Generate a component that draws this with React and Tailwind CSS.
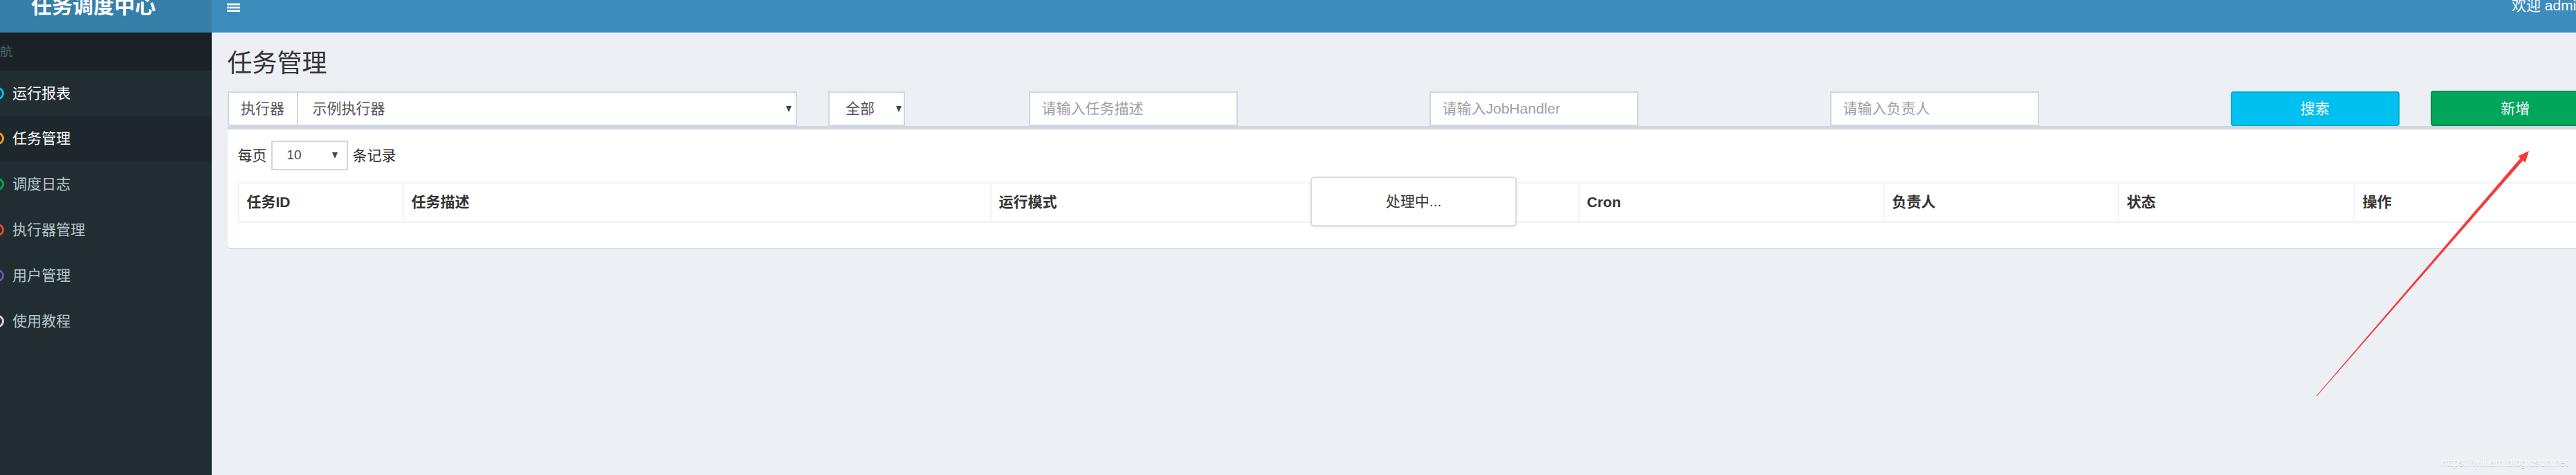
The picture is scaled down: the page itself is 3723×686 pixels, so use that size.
import React from "react";

const menu = [
  { name: "运行报表", color: "#00c0ef", bright: true },
  { name: "任务管理", color: "#f39c12", active: true },
  { name: "调度日志", color: "#00a65a" },
  { name: "执行器管理", color: "#dd4b39" },
  { name: "用户管理", color: "#605ca8" },
  { name: "使用教程", color: "#d2d6de" },
];

const columns = [
  { label: "任务ID", w: "w-[236px]" },
  { label: "任务描述", w: "w-[849px]" },
  { label: "运行模式", w: "w-[850px]" },
  { label: "Cron", w: "w-[441px]" },
  { label: "负责人", w: "w-[339px]" },
  { label: "状态", w: "w-[341px]" },
  { label: "操作", w: "flex-1" },
];

function Caret() {
  return (
    <svg width="8" height="9" viewBox="0 0 8 9" className="shrink-0">
      <path d="M0 0h8L4 9z" fill="#444" />
    </svg>
  );
}

function TextInput({ placeholder }) {
  return (
    <input
      readOnly
      placeholder={placeholder}
      className="w-[302px] h-[50px] border-2 border-[#d2d6de] bg-white px-[17px] text-[21px] text-[#555] placeholder:text-[#a0a0a0] outline-none"
    />
  );
}

export default function App() {
  return (
    <div className="relative w-[3723px] h-[686px] overflow-hidden bg-[#ecf0f5] font-['Liberation_Sans','Noto_Sans_CJK_SC',sans-serif] text-[#333]">
      <div className="w-[3780px] h-full flex flex-col">
        {/* top bar */}
        <div className="flex h-[47px] shrink-0">
          <div className="w-[306px] shrink-0 bg-[#367fa9] pl-[45px] overflow-hidden">
            <div className="-mt-[6px] text-[30px] leading-[30px] font-bold text-white whitespace-nowrap">任务调度中心</div>
          </div>
          <div className="flex-1 bg-[#3c8dbc] flex items-start pl-[22px] pr-[45px]">
            <svg width="19" height="12" viewBox="0 0 19 12" className="mt-[5px]">
              <rect x="0" y="0" width="19" height="2.6" fill="#fff" />
              <rect x="0" y="4.7" width="19" height="2.6" fill="#fff" />
              <rect x="0" y="9.4" width="19" height="2.6" fill="#fff" />
            </svg>
            <div className="ml-auto -mt-[4px] text-[21px] leading-[24px] text-white whitespace-nowrap">欢迎 admin</div>
          </div>
        </div>

        <div className="flex flex-1">
          {/* sidebar */}
          <div className="w-[306px] shrink-0 bg-[#222d32] overflow-hidden">
            <div className="h-[55px] bg-[#1a2226] flex items-center">
              <span className="-ml-[18px] text-[18px] leading-[20px] text-[#4b646f]">导航</span>
            </div>
            {menu.map((m, i) => (
              <div
                key={m.name}
                className={`${i === 0 ? "h-[65px]" : "h-[66px]"} flex items-center ${m.active ? "bg-[#1e282c] text-white" : m.bright ? "text-white" : "text-[#b8c7ce]"}`}
              >
                <svg width="18" height="18" viewBox="0 0 18 18" className="-ml-[12px] shrink-0">
                  <circle cx="9" cy="9" r="7.5" fill="none" stroke={m.color} strokeWidth="3" />
                </svg>
                <span className="ml-[12px] text-[21px] leading-[24px] whitespace-nowrap">{m.name}</span>
              </div>
            ))}
          </div>

          {/* content */}
          <div className="flex-1 px-[22.5px]">
            <h1 className="mt-[25px] text-[36px] leading-[40px] text-[#333]">任务管理</h1>

            <div className="mt-[20px] -mx-[22.5px] grid grid-cols-12 h-[50px]">
              <div className="col-span-3 px-[22.5px]">
                <div className="flex h-[50px] border-2 border-[#d2d6de] bg-white text-[21px] text-[#555]">
                  <div className="w-[100px] border-r-2 border-[#d2d6de] flex items-center justify-center">执行器</div>
                  <div className="flex-1 flex items-center pl-[21px] pr-[6px]">
                    <span>示例执行器</span>
                    <span className="ml-auto"><Caret /></span>
                  </div>
                </div>
              </div>
              <div className="col-span-1 px-[22.5px]">
                <div className="w-[111px] h-[50px] border-2 border-[#d2d6de] bg-white flex items-center justify-between pl-[23px] pr-[3px] text-[21px] text-[#555]">
                  <span>全部</span>
                  <Caret />
                </div>
              </div>
              <div className="col-span-2 px-[22.5px]">
                <TextInput placeholder="请输入任务描述" />
              </div>
              <div className="col-span-2 px-[22.5px]">
                <TextInput placeholder="请输入JobHandler" />
              </div>
              <div className="col-span-2 px-[22.5px]">
                <TextInput placeholder="请输入负责人" />
              </div>
              <div className="col-span-1 px-[22.5px]">
                <button className="w-full h-[50px] rounded-[4px] bg-[#00c0ef] border-2 border-[#00acd6] text-white text-[21px]">搜索</button>
              </div>
              <div className="col-span-1 px-[22.5px]">
                <button className="w-full h-[51px] -mt-[1px] rounded-[4px] bg-[#00a65a] border-2 border-[#008d4c] text-white text-[21px]">新增</button>
              </div>
            </div>

            <div className="bg-white border-t-[5px] border-[#d2d6de] rounded-[4px] shadow-[0_1px_1px_rgba(0,0,0,0.12)]">
              <div className="px-[15px] pt-[16px] pb-[36px]">
                <div className="flex items-center h-[43px] text-[21px] text-[#333]">
                  <span>每页</span>
                  <div className="ml-[6px] w-[111px] h-[43px] border-2 border-[#d2d6de] flex items-center justify-between pl-[21px] pr-[13px] text-[#444]">
                    <span className="text-[19px]">10</span>
                    <Caret />
                  </div>
                  <span className="ml-[7px]">条记录</span>
                </div>

                <div className="mt-[17px] flex h-[59px] border-2 border-b-[3px] border-[#f4f4f4]">
                  {columns.map((c, i) => (
                    <div
                      key={c.label}
                      className={`${c.w} shrink-0 ${i ? "border-l-2 border-[#f4f4f4]" : ""} flex items-center px-[11px] text-[21px] font-bold text-[#333]`}
                    >
                      {c.label}
                    </div>
                  ))}
                </div>
              </div>
            </div>
          </div>
        </div>
      </div>

      {/* loading overlay */}
      <div className="absolute left-[1894px] top-[255px] w-[298px] h-[72px] bg-white border-2 border-[#ddd] rounded-[5px] shadow-[0_1px_3px_rgba(0,0,0,0.1)] flex items-center justify-center text-[21px] text-[#333]">
        处理中...
      </div>

      {/* annotation arrow */}
      <svg className="absolute left-0 top-0 pointer-events-none" width="3723" height="686" viewBox="0 0 3723 686">
        <polygon
          points="3347.6,571.7 3642.6,228.5 3639.2,225.5 3655,218 3649.8,234.7 3646.4,231.7 3348.4,572.3"
          fill="#f53b3b"
        />
      </svg>

      <div className="absolute right-[11px] bottom-[10px] text-[15px] leading-[17px] text-[#fbfbfb] [text-shadow:0_1px_1px_rgba(0,0,0,0.18)]">
        https://william.blog.csdn.net
      </div>
    </div>
  );
}
